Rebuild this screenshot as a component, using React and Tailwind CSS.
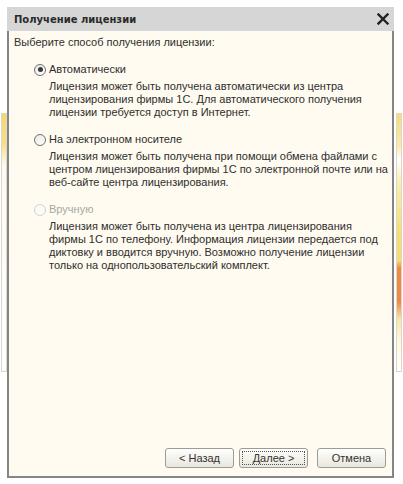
import React from "react";

function Radio({ checked, disabled }) {
  return (
    <span
      className={
        "flex items-center justify-center w-[12px] h-[12px] rounded-full border shrink-0 " +
        (disabled ? "border-[#d2d2cc] bg-[#fdfcf8]" : "border-[#6f6f6f] bg-gradient-to-br from-[#e8e8e4] to-white")
      }
    >
      {checked ? <span className="block w-[5px] h-[5px] rounded-full bg-[#3a3a3a]" /> : null}
    </span>
  );
}

function Option({ label, lines, checked, disabled }) {
  return (
    <div className="flex flex-col">
      <div className="flex items-center h-[13px] gap-[3px]">
        <Radio checked={checked} disabled={disabled} />
        <span className={disabled ? "text-[#a8a8a0]" : "text-[#2e2e2e]"}>{label}</span>
      </div>
      <div className="mt-[4px] pl-[15px] flex flex-col text-[#2e2e2e]">
        {lines.map((l, i) => (
          <span key={i} className="whitespace-nowrap h-[13px]">
            {l}
          </span>
        ))}
      </div>
    </div>
  );
}

function Button({ children, focused }) {
  return (
    <div className="w-[69px] h-[20px] rounded-[3px] border border-[#9c9c96] bg-gradient-to-b from-[#fefefc] to-[#e9e7de] p-[2px] flex">
      <div
        className={
          "flex-1 flex items-center justify-center text-[#333] " +
          (focused ? "border border-dotted border-[#555]" : "border border-transparent")
        }
      >
        {children}
      </div>
    </div>
  );
}

export default function App() {
  return (
    <div
      className="relative w-[403px] h-[484px] bg-white overflow-hidden text-[11px] leading-[13px]"
      style={{ fontFamily: '"Liberation Sans", Arial, sans-serif' }}
    >
      {/* background app strips peeking behind the window */}
      <div className="absolute left-[1px] top-[113px] w-[6px] h-[259px] border border-[#d8d8d0] bg-[linear-gradient(to_bottom,#f6d66c_0%,#f8e08a_12%,#fffaf0_20%,#ffffff_100%)]" />
      <div className="absolute left-[396px] top-[113px] w-[6px] h-[259px] border border-[#d8d8d0] bg-[linear-gradient(to_bottom,#f6dc74_0%,#fbe9a8_12%,#ffffff_18%,#faf0b0_26%,#f7e070_45%,#f6dc6c_57%,#f08a40_60%,#ee8a44_73%,#fbe6a8_80%,#fff6dc_88%,#ffffff_100%)]" />

      <div className="relative pl-[7px] pt-[7px] w-[394px] h-[478px] flex flex-col">
        <div className="h-[24px] bg-[#d6d6d6] flex items-center justify-between pl-[7px] pr-[5px] shrink-0">
          <span
            className="font-bold text-[10px] text-[#2a2a2a]"
            style={{ fontFamily: '"DejaVu Sans", Verdana, sans-serif' }}
          >
            Получение лицензии
          </span>
          <svg width="12" height="12" viewBox="0 0 12 12">
            <path d="M1.5 1.5 L10.5 10.5 M10.5 1.5 L1.5 10.5" stroke="#222" strokeWidth="2.4" strokeLinecap="square" />
          </svg>
        </div>
        <div className="flex-1 bg-[#fffbf0] border-x-2 border-b-2 border-[#858585] flex flex-col pt-[5px]">
          <div className="pl-[5px] text-[#2e2e2e] h-[13px]">Выберите способ получения лицензии:</div>
          <div className="mt-[14px] pl-[25px] flex flex-col gap-[14px]">
            <Option
              checked
              label="Автоматически"
              lines={[
                "Лицензия может быть получена автоматически из центра",
                "лицензирования фирмы 1С. Для автоматического получения",
                "лицензии требуется доступ в Интернет.",
              ]}
            />
            <Option
              label="На электронном носителе"
              lines={[
                "Лицензия может быть получена при помощи обмена файлами с",
                "центром лицензирования фирмы 1С по электронной почте или на",
                "веб-сайте центра лицензирования.",
              ]}
            />
            <Option
              disabled
              label="Вручную"
              lines={[
                "Лицензия может быть получена из центра лицензирования",
                "фирмы 1С по телефону. Информация лицензии передается под",
                "диктовку и вводится вручную. Возможно получение лицензии",
                "только на однопользовательский комплект.",
              ]}
            />
          </div>
          <div className="flex-1" />
          <div className="flex justify-end pr-[6px] pb-[8px]">
            <Button>&lt; Назад</Button>
            <div className="ml-[5px]">
              <Button focused>Далее &gt;</Button>
            </div>
            <div className="ml-[9px]">
              <Button>Отмена</Button>
            </div>
          </div>
        </div>
      </div>
    </div>
  );
}
